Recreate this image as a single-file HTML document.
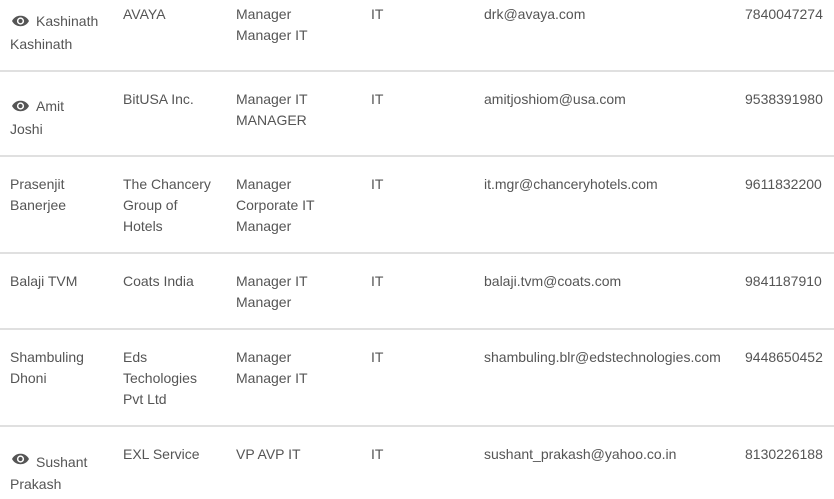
<!DOCTYPE html><html><head><style>
body{margin:0;width:834px;height:499px;background:#fff;position:relative;overflow:hidden;font-family:"Liberation Sans",sans-serif;font-size:14px;color:#555}
.t{position:absolute;line-height:20px;white-space:nowrap}
.b{position:absolute;left:0;width:834px;height:2px;background:#e0e0e0}
svg{position:absolute}
</style></head><body>
<div class="b" style="top:70px"></div><div class="b" style="top:155px"></div><div class="b" style="top:252px"></div><div class="b" style="top:328px"></div><div class="b" style="top:425px"></div>
<svg style="left:11px;top:15px" width="19" height="12" viewBox="0 0 19 12"><path d="M1 6C3.5 1.5 7 0.8 9.5 0.8S15.5 1.5 18 6C15.5 10.5 12 11.2 9.5 11.2S3.5 10.5 1 6Z" fill="#555"/><circle cx="9.5" cy="6" r="3.6" fill="#fff"/><circle cx="9.5" cy="6" r="2.1" fill="#555"/></svg>
<svg style="left:11px;top:100px" width="19" height="12" viewBox="0 0 19 12"><path d="M1 6C3.5 1.5 7 0.8 9.5 0.8S15.5 1.5 18 6C15.5 10.5 12 11.2 9.5 11.2S3.5 10.5 1 6Z" fill="#555"/><circle cx="9.5" cy="6" r="3.6" fill="#fff"/><circle cx="9.5" cy="6" r="2.1" fill="#555"/></svg>
<svg style="left:11px;top:453px" width="19" height="12" viewBox="0 0 19 12"><path d="M1 6C3.5 1.5 7 0.8 9.5 0.8S15.5 1.5 18 6C15.5 10.5 12 11.2 9.5 11.2S3.5 10.5 1 6Z" fill="#555"/><circle cx="9.5" cy="6" r="3.6" fill="#fff"/><circle cx="9.5" cy="6" r="2.1" fill="#555"/></svg>

<div class="t" style="left:36px;top:11px">Kashinath</div><div class="t" style="left:10px;top:34px">Kashinath</div>
<div class="t" style="left:123px;top:4px">AVAYA</div>
<div class="t" style="left:236px;top:4px">Manager</div><div class="t" style="left:236px;top:25px">Manager IT</div>
<div class="t" style="left:371px;top:4px">IT</div><div class="t" style="left:484px;top:4px">drk@avaya.com</div><div class="t" style="left:745px;top:4px">7840047274</div>

<div class="t" style="left:36px;top:96px">Amit</div><div class="t" style="left:10px;top:119px">Joshi</div>
<div class="t" style="left:123px;top:89px">BitUSA Inc.</div>
<div class="t" style="left:236px;top:89px">Manager IT</div><div class="t" style="left:236px;top:110px">MANAGER</div>
<div class="t" style="left:371px;top:89px">IT</div><div class="t" style="left:484px;top:89px">amitjoshiom@usa.com</div><div class="t" style="left:745px;top:89px">9538391980</div>

<div class="t" style="left:10px;top:174px">Prasenjit</div><div class="t" style="left:10px;top:195px">Banerjee</div>
<div class="t" style="left:123px;top:174px">The Chancery</div><div class="t" style="left:123px;top:195px">Group of</div><div class="t" style="left:123px;top:216px">Hotels</div>
<div class="t" style="left:236px;top:174px">Manager</div><div class="t" style="left:236px;top:195px">Corporate IT</div><div class="t" style="left:236px;top:216px">Manager</div>
<div class="t" style="left:371px;top:174px">IT</div><div class="t" style="left:484px;top:174px">it.mgr@chanceryhotels.com</div><div class="t" style="left:745px;top:174px">9611832200</div>

<div class="t" style="left:10px;top:271px">Balaji TVM</div>
<div class="t" style="left:123px;top:271px">Coats India</div>
<div class="t" style="left:236px;top:271px">Manager IT</div><div class="t" style="left:236px;top:292px">Manager</div>
<div class="t" style="left:371px;top:271px">IT</div><div class="t" style="left:484px;top:271px">balaji.tvm@coats.com</div><div class="t" style="left:745px;top:271px">9841187910</div>

<div class="t" style="left:10px;top:347px">Shambuling</div><div class="t" style="left:10px;top:368px">Dhoni</div>
<div class="t" style="left:123px;top:347px">Eds</div><div class="t" style="left:123px;top:368px">Techologies</div><div class="t" style="left:123px;top:389px">Pvt Ltd</div>
<div class="t" style="left:236px;top:347px">Manager</div><div class="t" style="left:236px;top:368px">Manager IT</div>
<div class="t" style="left:371px;top:347px">IT</div><div class="t" style="left:484px;top:347px">shambuling.blr@edstechnologies.com</div><div class="t" style="left:745px;top:347px">9448650452</div>

<div class="t" style="left:36px;top:452px">Sushant</div><div class="t" style="left:10px;top:474px">Prakash</div>
<div class="t" style="left:123px;top:444px">EXL Service</div>
<div class="t" style="left:236px;top:444px">VP AVP IT</div>
<div class="t" style="left:371px;top:444px">IT</div><div class="t" style="left:484px;top:444px">sushant_prakash@yahoo.co.in</div><div class="t" style="left:745px;top:444px">8130226188</div>
</body></html>
